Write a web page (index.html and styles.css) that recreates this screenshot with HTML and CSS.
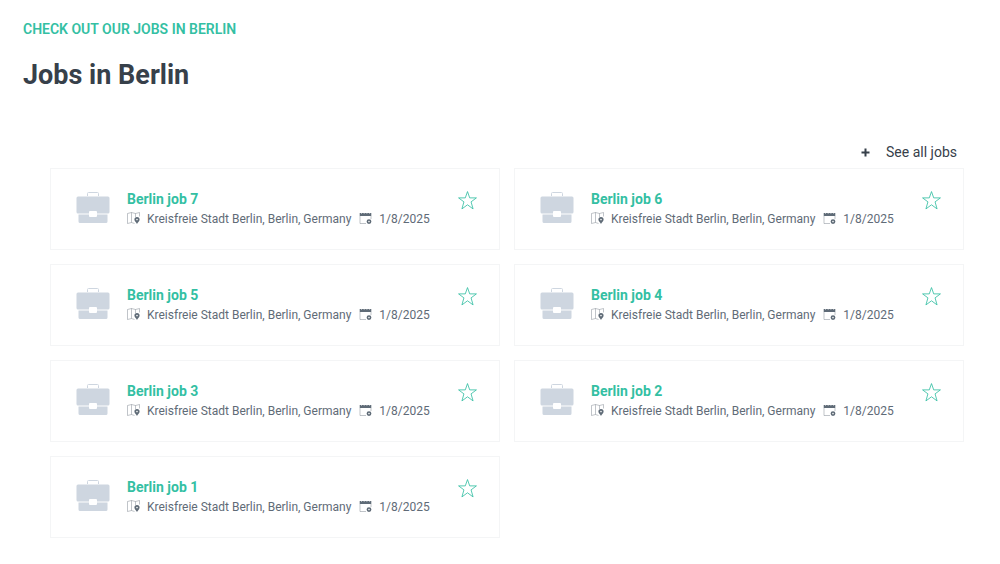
FILE: index.html
```
<!DOCTYPE html>
<html lang="en">
<head>
    <meta charset="UTF-8" />
    <meta name="viewport" content="width=device-width, initial-scale=1" />
    <title>Jobs in Berlin</title>
    <link rel="stylesheet" href="styles.css">
</head>
<body>
    <svg width="0" height="0" class="sprite" aria-hidden="true">
        <symbol id="briefcase" viewBox="0 0 34 32">
            <path d="M11.5 4V1.5Q11.5 .5 12.500 .5H21.500Q22.500 .5 22.500 1.500V4" fill="none" stroke="currentColor" />
            <path d="M2 4.500H32Q33.500 4.500 33.500 6V20Q33.500 21.500 32 21.500H21V20Q21 19 20 19H14Q13 19 13 20V21.500H2Q.5 21.500 .5 20V6Q.5 4.500 2 4.500Z" fill="currentColor" />
            <path d="M2.500 22.500H13V24Q13 25 14 25H20Q21 25 21 24V22.500H31.500V29.500Q31.500 31 30 31H4Q2.500 31 2.500 29.500Z" fill="currentColor" />
        </symbol>
        <symbol id="map" viewBox="0 0 14 14">
            <path d="M.5 1.500L4.500 .5L8.500 1.500L12.500 .5V4.500M.5 1.500V11.500L4.500 10.500L7.500 11.500M4.500 .5V10.500M8.500 1.500V5" fill="none" stroke="currentColor" stroke-width=".4" />
            <path d="M10 5A2.600 2.600 0 0 1 12.600 7.600C12.600 9.500 10.800 10.500 10 12C9.200 10.500 7.400 9.500 7.400 7.600A2.600 2.600 0 0 1 10 5ZM10 6.800A.8 .8 0 1 0 10 8.400A.8 .8 0 1 0 10 6.800Z" fill="currentColor" fill-rule="evenodd" />
        </symbol>
        <symbol id="calendar" viewBox="0 0 14 14">
            <path d="M.7 1H12.300V4H.7Z" fill="currentColor" />
            <path d="M2.500 0V2M5.200 0V2M7.900 0V2M10.600 0V2" stroke="#fff" stroke-width=".5" />
            <path d="M1 4V11.500H7M12 4V7" fill="none" stroke="currentColor" stroke-width=".4" />
            <path d="M10 7.200A2.400 2.400 0 1 1 10 12A2.400 2.400 0 1 1 10 7.200ZM10 8.800A.8 .8 0 1 0 10 10.400A.8 .8 0 1 0 10 8.800Z" fill="currentColor" fill-rule="evenodd" />
        </symbol>
        <symbol id="star" viewBox="0 0 20 20">
            <path d="M10 1.500L12.100 7.500H18.500L13.400 11.300L15.300 18L10 14.100L4.700 18L6.600 11.300L1.500 7.500H7.900Z" fill="none" stroke="currentColor" stroke-width=".8" />
        </symbol>
    </svg>

    <main class="jobs">
        <p class="sub">CHECK OUT OUR JOBS IN BERLIN</p>
        <h1>Jobs in Berlin</h1>

        <div class="list">
            <a href="#" class="see-all">
                <svg width="9" height="9" viewBox="0 0 9 9"><path d="M4.500 .5V8.500M.5 4.500H8.500" stroke="currentColor" stroke-width="2" /></svg>
                See all jobs
            </a>
            <div class="grid" id="jobs"></div>
        </div>
    </main>

    <script>
        const list = document.getElementById('jobs');
        for (let i = 7; i > 0; i--) {
            list.innerHTML += `
                <article class="card">
                    <svg class="logo"><use href="#briefcase" /></svg>
                    <div class="info">
                        <h2><a href="#">Berlin job ${i}</a></h2>
                        <div class="meta">
                            <svg class="icon"><use href="#map" /></svg>
                            <span class="place">Kreisfreie Stadt Berlin, Berlin, Germany</span>
                            <svg class="icon"><use href="#calendar" /></svg>
                            <span>1/8/2025</span>
                        </div>
                    </div>
                    <button class="save" type="button" aria-label="Save Berlin job ${i}"><svg><use href="#star" /></svg></button>
                </article>`;
        }
    </script>
</body>
</html>
```

FILE: styles.css
```
* {
    box-sizing: border-box;
}
body {
    font-family: Roboto, sans-serif;
    margin: 0;
    background: #fff;
    color: #37404a;
}
a {
    color: inherit;
    text-decoration: none;
}
a:hover {
    text-decoration: underline;
}
svg {
    display: block;
    flex: none;
}
.sprite {
    position: absolute;
}
.jobs {
    padding: 17px 23px 24px;
}
.sub {
    margin: 0;
    color: #34bfa3;
    font-size: 14px;
    font-weight: 600;
    line-height: 24px;
}
h1 {
    margin: 17px 0 0;
    font-size: 27px;
    font-weight: 700;
    line-height: 34px;
}
.list {
    display: flex;
    flex-direction: column;
    margin-top: 48px;
    padding: 0 13px 0 27px;
}
.see-all {
    display: flex;
    align-items: center;
    align-self: flex-end;
    gap: 16px;
    margin-right: 7px;
    font-size: 14px;
    line-height: 24px;
}
.grid {
    display: grid;
    grid-template-columns: 1fr 1fr;
    gap: 14px;
    margin-top: 4px;
}
.card {
    display: flex;
    align-items: flex-start;
    padding: 20px 21px 20px 25px;
    border: 1px solid #f4f5f6;
}
.logo {
    width: 34px;
    height: 32px;
    margin-top: 3px;
    color: #ced6e0;
}
.info {
    flex: 1;
    margin-left: 17px;
}
h2 {
    margin: 0;
    color: #34bfa3;
    font-size: 14px;
    font-weight: 700;
    line-height: 20px;
}
.meta {
    display: flex;
    align-items: center;
    color: #5f6b77;
    font-size: 12px;
    line-height: 20px;
}
.icon {
    width: 14px;
    height: 14px;
    margin: 0 6px 1px 0;
}
.place {
    margin-right: 8px;
}
.save {
    margin-top: 1px;
    padding: 0;
    border: 0;
    background: none;
    color: #34bfa3;
    cursor: pointer;
}
.save svg {
    width: 21px;
    height: 21px;
}
```
